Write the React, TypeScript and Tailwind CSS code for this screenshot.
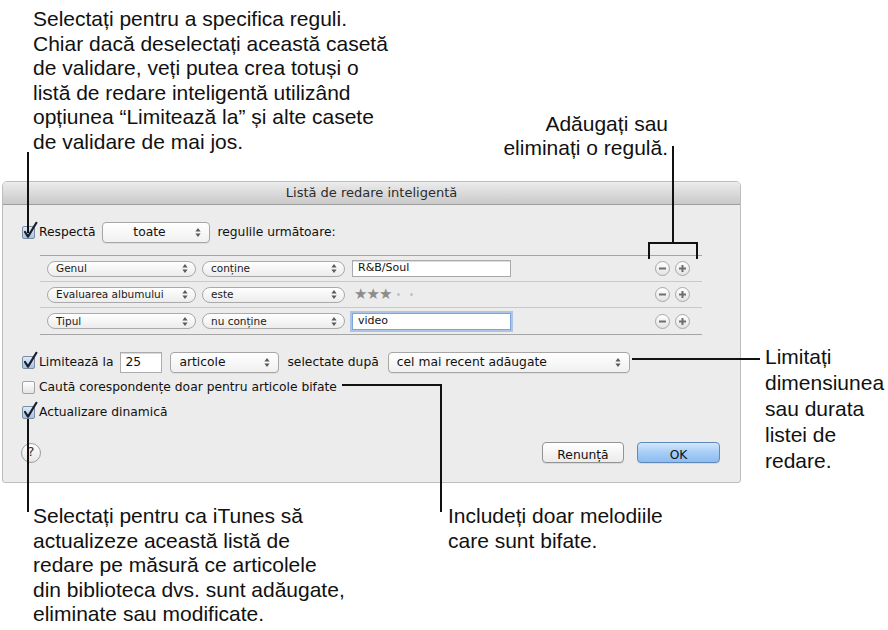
import React from 'react';

const Arrows = () => (
  <svg width="6" height="9" viewBox="0 0 6 9" className="shrink-0">
    <path d="M3 0 L5.6 3.4 H0.4 Z M3 9 L0.4 5.6 H5.6 Z" fill="#5a5a5a" />
  </svg>
);

const CheckBox = ({ on }: { on: boolean }) => (
  <span className="relative inline-block w-[13px] h-[13px] shrink-0">
    <span
      className={`absolute inset-0 rounded-[2px] border ${
        on
          ? 'border-[#7d8aa0] bg-linear-to-b from-[#dfeaf8] to-[#a3c3ea]'
          : 'border-[#a3a3a3] bg-linear-to-b from-white to-[#e4e4e4]'
      }`}
    />
    {on && (
      <svg className="absolute left-[1px] -top-[5px] w-[15px] h-[18px]" viewBox="0 0 15 18">
        <path
          d="M2 11 L5 15.6 L13.4 1.8"
          fill="none"
          stroke="#18202c"
          strokeWidth="2.2"
          strokeLinecap="round"
          strokeLinejoin="round"
        />
      </svg>
    )}
  </span>
);

// small pill popup used in the rule rows
const Pill = ({ label, w }: { label: string; w: string }) => (
  <div
    className={`${w} h-[16px] flex items-center justify-between pl-[8px] pr-[7px] rounded-full border border-[#a9a9a9] bg-linear-to-b from-white to-[#ececec] text-[10.5px] text-[#1a1a1a] shrink-0`}
  >
    <span>{label}</span>
    <Arrows />
  </div>
);

const Popup = ({ label, w, center }: { label: string; w: string; center?: boolean }) => (
  <div
    className={`${w} h-[21px] flex items-center pr-[8px] rounded-[4px] border border-[#a6a6a6] bg-linear-to-b from-white to-[#f0f0f0] shadow-[0_1px_0_rgba(0,0,0,0.06)] shrink-0`}
  >
    <span className={center ? 'flex-1 text-center' : 'flex-1 pl-[8px]'}>{label}</span>
    <Arrows />
  </div>
);

const RoundBtn = ({ sign }: { sign: '-' | '+' }) => (
  <span className="w-[15px] h-[15px] rounded-full border border-[#a8a8a8] bg-linear-to-b from-white to-[#e3e3e3] flex items-center justify-center">
    <svg width="9" height="9" viewBox="0 0 9 9">
      <path d="M1 4.5 H8" stroke="#6f6f6f" strokeWidth="2" />
      {sign === '+' && <path d="M4.5 1 V8" stroke="#6f6f6f" strokeWidth="2" />}
    </svg>
  </span>
);

const rules = [
  { field: 'Genul', op: 'conține', value: 'R&B/Soul' },
  { field: 'Evaluarea albumului', op: 'este', value: '' },
  { field: 'Tipul', op: 'nu conține', value: 'video' },
];

const Dialog = () => (
  <div className="ml-[2px] w-[739px] h-[302px] flex flex-col border border-[#bdbdbd] rounded-t-[5px] rounded-b-[3px] bg-[#ececec] overflow-hidden font-['DejaVu_Sans',sans-serif] text-[12.3px] text-[#111]">
    {/* Title bar */}
    <div className="h-[23px] shrink-0 flex items-center justify-center border-b border-[#9d9d9d] bg-linear-to-b from-[#ececec] to-[#c9c9c9] text-[13px] text-[#2c2c2c]">
      Listă de redare inteligentă
    </div>

    <div className="flex-1 flex flex-col">
      {/* Match row */}
      <div className="mt-[17px] h-[21px] pl-[19px] flex items-center">
        <CheckBox on />
        <span className="ml-[4px]">Respectă</span>
        <div className="ml-[7px]">
          <Popup label="toate" w="w-[108px]" center />
        </div>
        <span className="ml-[7px]">regulile următoare:</span>
      </div>

      {/* Rules */}
      <div className="mt-[12px] ml-[37px] w-[662px] border-t border-[#a5a5a5] border-b border-b-[#a5a5a5]">
        {rules.map((r, i) => (
          <div
            key={r.field}
            className={`h-[26px] flex items-center pl-[7px] pr-[12px] ${i < 2 ? 'border-b border-[#c9c9c9]' : ''}`}
          >
            <Pill label={r.field} w="w-[149px]" />
            <div className="ml-[6px]">
              <Pill label={r.op} w="w-[143px]" />
            </div>
            {i === 1 ? (
              <div className="ml-[9px] flex items-center text-[#8c8c8c] text-[15px] leading-none tracking-[-1px]">
                <span>★★★</span>
                <span className="ml-[6px] w-[3px] h-[3px] rounded-full bg-[#c2c2c2]" />
                <span className="ml-[10px] w-[3px] h-[3px] rounded-full bg-[#c2c2c2]" />
              </div>
            ) : (
              <div
                className={`ml-[7px] w-[159px] h-[17px] flex items-center pl-[5px] bg-white text-[11px] ${
                  i === 2
                    ? 'border border-[#7ba6dc] shadow-[0_0_0_2px_rgba(120,165,225,0.55)]'
                    : 'border border-[#a9a9a9] shadow-[inset_0_1px_0_#dcdcdc]'
                }`}
              >
                {r.value}
              </div>
            )}
            <div className="ml-auto flex gap-[5px]">
              <RoundBtn sign="-" />
              <RoundBtn sign="+" />
            </div>
          </div>
        ))}
      </div>

      {/* Limit row */}
      <div className="mt-[17px] h-[21px] pl-[19px] flex items-center">
        <CheckBox on />
        <span className="ml-[4px]">Limitează la</span>
        <div className="ml-[7px] w-[42px] h-[21px] flex items-center pl-[4px] bg-white border border-[#acacac] shadow-[inset_0_1px_0_#dadada]">
          25
        </div>
        <div className="ml-[8px]">
          <Popup label="articole" w="w-[109px]" />
        </div>
        <span className="ml-[8px]">selectate după</span>
        <div className="ml-[9px]">
          <Popup label="cel mai recent adăugate" w="w-[242px]" />
        </div>
      </div>

      <div className="mt-[5px] h-[18px] pl-[19px] flex items-center">
        <CheckBox on={false} />
        <span className="ml-[4px]">Caută corespondențe doar pentru articole bifate</span>
      </div>

      <div className="mt-[7px] h-[18px] pl-[19px] flex items-center">
        <CheckBox on />
        <span className="ml-[4px]">Actualizare dinamică</span>
      </div>

      {/* Bottom buttons */}
      <div className="mt-auto mb-[19px] h-[21px] flex items-center">
        <span className="ml-[18px] w-[20px] h-[20px] rounded-full border border-[#9c9c9c] bg-linear-to-b from-white to-[#e6e6e6] flex items-center justify-center text-[13px] text-[#333]">
          ?
        </span>
        <button className="ml-auto w-[82px] h-[21px] rounded-[4px] border border-[#939393] bg-linear-to-b from-white to-[#ebebeb] shadow-[0_1px_0_rgba(0,0,0,0.08)]">
          Renunță
        </button>
        <button className="ml-[13px] mr-[20px] w-[83px] h-[21px] rounded-[4px] border border-[#5f88bd] bg-linear-to-b from-[#d3e7fb] via-[#a6cdf5] to-[#8dbdf0] shadow-[0_1px_0_rgba(0,0,0,0.08)]">
          OK
        </button>
      </div>
    </div>
  </div>
);

export default function App() {
  return (
    <div className="relative w-[888px] h-[630px] bg-white overflow-hidden font-['Liberation_Sans',Arial,sans-serif] text-[21px] leading-[24.6px] text-[#111]">
      {/* Top callouts */}
      <div className="flex h-[181px]">
        <p className="pl-[33px] pt-[7px]">
          Selectați pentru a specifica reguli.
          <br />
          Chiar dacă deselectați această casetă
          <br />
          de validare, veți putea crea totuși o
          <br />
          listă de redare inteligentă utilizând
          <br />
          opțiunea “Limitează la” și alte casete
          <br />
          de validare de mai jos.
        </p>
        <p className="ml-auto mr-[220px] self-end mb-[20px] text-right">
          Adăugați sau
          <br />
          eliminați o regulă.
        </p>
      </div>

      {/* Dialog + side callout */}
      <div className="flex">
        <Dialog />
        <p className="ml-[24px] pt-[163px] leading-[26px]">
          Limitați
          <br />
          dimensiunea
          <br />
          sau durata
          <br />
          listei de
          <br />
          redare.
        </p>
      </div>

      {/* Bottom callouts */}
      <div className="flex pt-[21px]">
        <p className="pl-[33px] w-[448px]">
          Selectați pentru ca iTunes să
          <br />
          actualizeze această listă de
          <br />
          redare pe măsură ce articolele
          <br />
          din biblioteca dvs. sunt adăugate,
          <br />
          eliminate sau modificate.
        </p>
        <p>
          Includeți doar melodiile
          <br />
          care sunt bifate.
        </p>
      </div>

      {/* Leader lines */}
      <div className="absolute left-[27px] top-[152px] w-[2px] h-[81px] bg-[#111]" />
      <div className="absolute left-[672px] top-[146px] w-[2px] h-[98px] bg-[#111]" />
      <div className="absolute left-[648px] top-[242px] w-[50px] h-[2px] bg-[#111]" />
      <div className="absolute left-[648px] top-[242px] w-[2px] h-[17px] bg-[#111]" />
      <div className="absolute left-[696px] top-[242px] w-[2px] h-[17px] bg-[#111]" />
      <div className="absolute left-[632px] top-[358px] w-[128px] h-[2px] bg-[#111]" />
      <div className="absolute left-[342px] top-[384px] w-[100px] h-[2px] bg-[#111]" />
      <div className="absolute left-[440px] top-[384px] w-[2px] h-[128px] bg-[#111]" />
      <div className="absolute left-[27px] top-[419px] w-[2px] h-[93px] bg-[#111]" />
    </div>
  );
}
